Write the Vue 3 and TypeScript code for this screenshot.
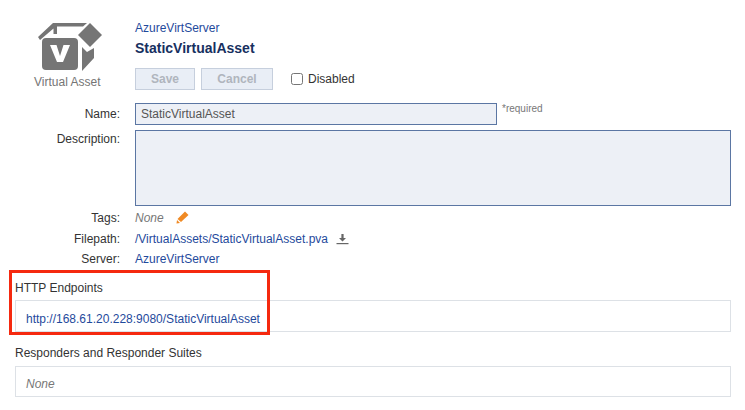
<script setup lang="ts">
const serverName = 'AzureVirtServer'
const assetName = 'StaticVirtualAsset'
</script>

<template>
  <div class="page">
    <header class="head">
      <div class="logo">
        <svg class="cube" width="66" height="52" viewBox="38 20 66 52">
          <path d="M38 37 L53 23 H87 L83 26.5 H57 V34 H53.5 V28.5 L40 40 Z" fill="#757575" />
          <path d="M90 23 L102 35 L90 47 L78 35 Z" fill="#757575" />
          <path d="M82 47 L87 52 L94 48 V58 L82 71 Z" fill="#757575" />
          <rect x="42" y="38" width="36" height="32" rx="4" fill="#757575" />
          <path d="M50 45 H56.5 L60 56 L63.5 45 H70 L63 62 H57 Z" fill="#fff" />
        </svg>
        <span class="kind">Virtual Asset</span>
      </div>
      <div class="title">
        <a class="link crumb">{{ serverName }}</a>
        <h1>{{ assetName }}</h1>
        <div class="actions">
          <button class="save" disabled>Save</button>
          <button class="cancel" disabled>Cancel</button>
          <label class="check"><input type="checkbox" />Disabled</label>
        </div>
      </div>
    </header>

    <div class="form">
      <div class="row name-row">
        <label>Name:</label>
        <div class="field name">{{ assetName }}</div>
        <span class="req">*required</span>
      </div>
      <div class="row desc-row">
        <label>Description:</label>
        <div class="field desc"></div>
      </div>
      <div class="row info tags">
        <label>Tags:</label>
        <em>None</em>
        <svg class="pencil" width="13" height="13" viewBox="0 0 13 13">
          <path d="M9 0.5 L12.5 4 L5 11 L1.5 8 Z" fill="#f08a24" />
          <path d="M1 9 L4 12 L0.5 12.5 Z" fill="#f08a24" />
        </svg>
      </div>
      <div class="row info">
        <label>Filepath:</label>
        <a class="link">/VirtualAssets/StaticVirtualAsset.pva</a>
        <svg class="dl" width="13" height="11" viewBox="0 0 13 11">
          <path d="M5.4 0 H7.6 V4 H10 L6.5 7.6 L3 4 H5.4 Z" fill="#666" />
          <rect x="0.5" y="9" width="12" height="1.2" fill="#666" />
        </svg>
      </div>
      <div class="row info">
        <label>Server:</label>
        <a class="link">{{ serverName }}</a>
      </div>
    </div>

    <section class="endpoints">
      <h2>HTTP Endpoints</h2>
      <div class="panel"><a class="link">http://168.61.20.228:9080/StaticVirtualAsset</a></div>
      <div class="callout"></div>
    </section>

    <section class="responders">
      <h2>Responders and Responder Suites</h2>
      <div class="panel"><em>None</em></div>
    </section>
  </div>
</template>

<style>
html, body { margin: 0; background: #fff; }
</style>

<style scoped>
.page {
  width: 745px;
  height: 410px;
  overflow: hidden;
  box-sizing: border-box;
  padding: 20px 14px 0 15px;
  font-family: "Liberation Sans", Arial, sans-serif;
  font-size: 12px;
  color: #333;
}
.head { display: flex; height: 83px; }
.logo {
  width: 120px;
  flex: none;
  display: flex;
  flex-direction: column;
  align-items: flex-start;
}
.cube { margin: 0 0 0 23px; display: block; }
.kind { margin: 3px 0 0 19px; color: #757575; line-height: 14px; }
.link { color: #1f4a9c; }
.crumb { line-height: 16px; display: block; }
h1 {
  margin: 2px 0 0;
  font-size: 14px;
  line-height: 20px;
  font-weight: 700;
  color: #17305f;
}
.actions { display: flex; align-items: center; margin-top: 10px; height: 22px; }
button {
  height: 22px;
  box-sizing: border-box;
  background: #e9eef6;
  border: 1px solid #c6cfdd;
  color: #b0b5bd;
  font: 700 12px "Liberation Sans", Arial, sans-serif;
  padding: 0;
}
.save { width: 60px; margin-right: 6px; }
.cancel { width: 72px; margin-right: 18px; }
.check { display: flex; align-items: center; }
.check input { width: 12px; height: 12px; margin: 0 5px 0 0; }
.row { display: flex; }
.row label { width: 105px; margin-right: 15px; text-align: right; flex: none; }
.name-row { height: 22px; }
.name-row label, .desc-row label { line-height: 22px; }
.field {
  box-sizing: border-box;
  background: #edf0f6;
  border: 1px solid #5b76a3;
  color: #555;
}
.name { width: 362px; height: 22px; line-height: 20px; padding-left: 5px; }
.req { font-size: 10px; color: #777; margin-left: 5px; line-height: 11px; }
.desc-row { margin-top: 5px; }
.desc-row label { line-height: 18px; }
.desc { width: 596px; height: 76px; }
.info { line-height: 20px; height: 20.5px; }
.tags { margin-top: 2px; }
.info em { color: #777; }
.pencil { margin: 3px 0 0 12px; }
.dl { margin: 5px 0 0 8px; }
h2 { margin: 0; font-size: 12px; font-weight: 400; line-height: 14px; }
.panel {
  box-sizing: border-box;
  height: 32px;
  margin-top: 5px;
  border: 1px solid #dde1e6;
  padding: 3px 0 0 10px;
  line-height: 30px;
}
.panel em { color: #777; }
.endpoints { position: relative; margin-top: 0; padding-top: 11px; }
.callout {
  position: absolute;
  left: -6px;
  top: 0;
  width: 261px;
  height: 65px;
  box-sizing: border-box;
  border: 3px solid #f5290f;
}
.responders { margin-top: 14px; }
.responders .panel { margin-top: 6px; height: 31px; padding-top: 2px; }
</style>
